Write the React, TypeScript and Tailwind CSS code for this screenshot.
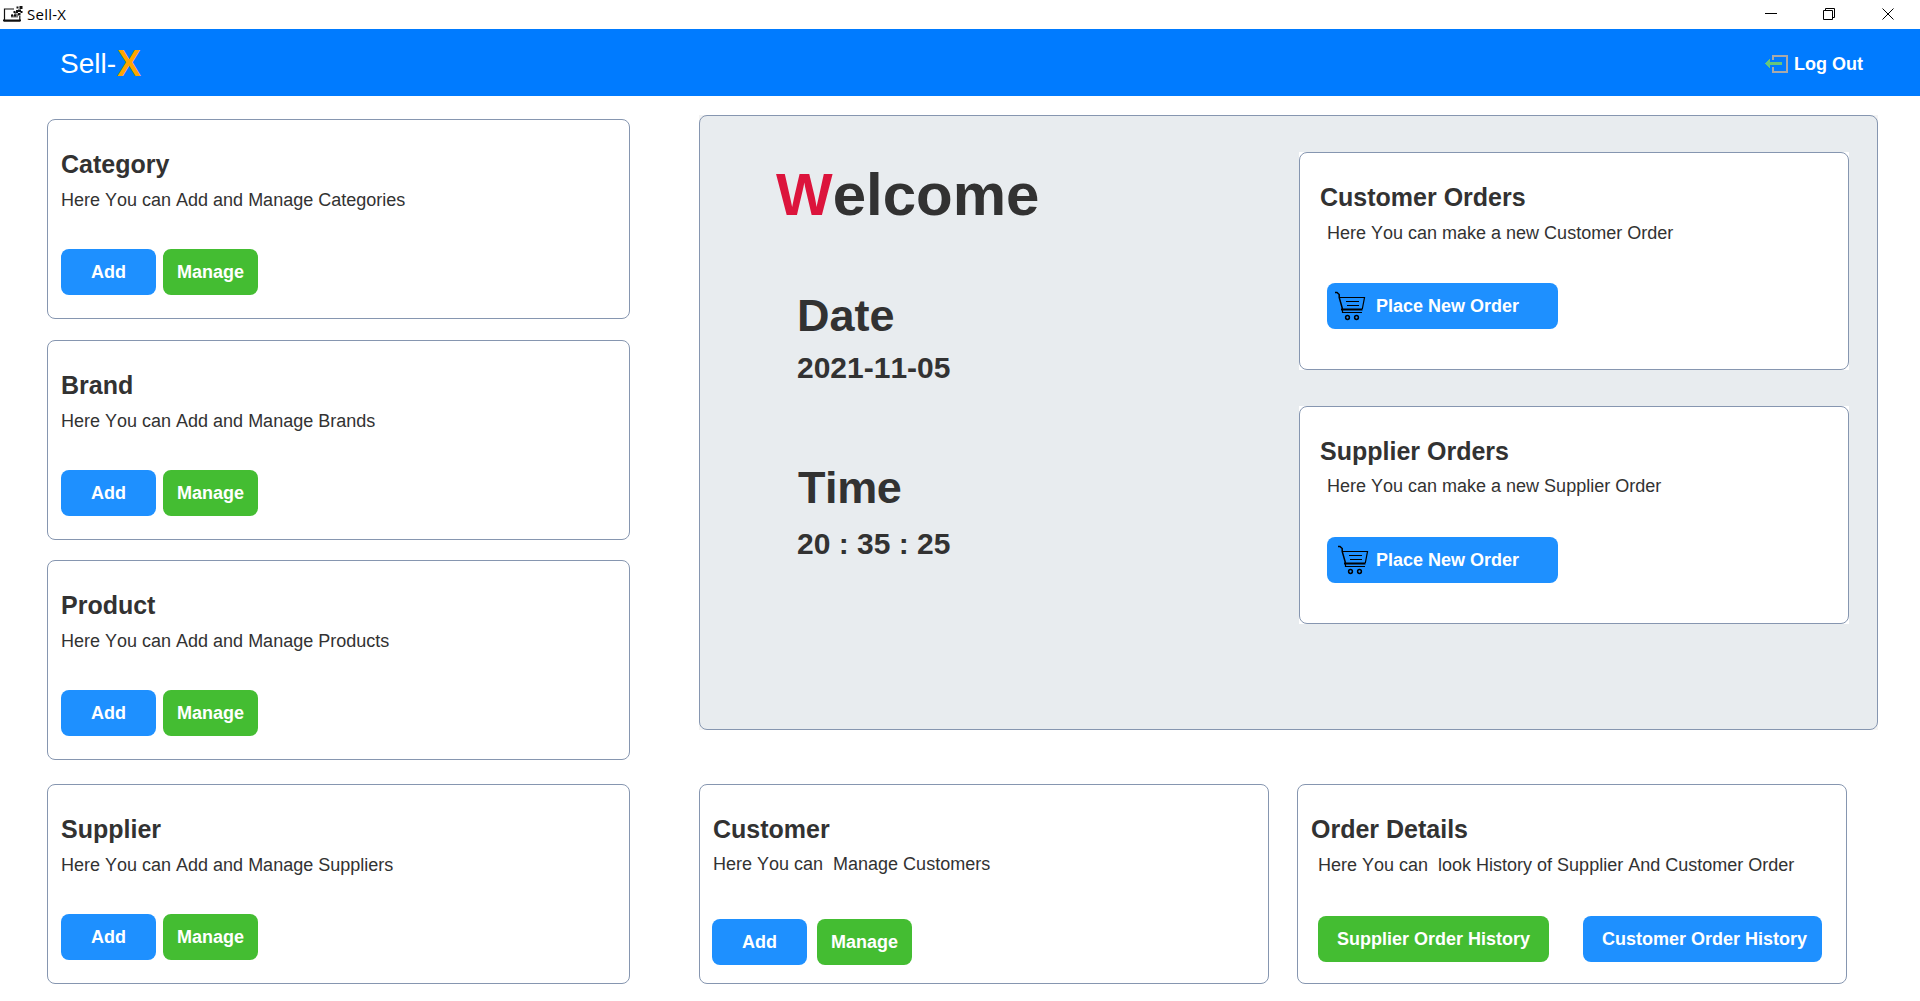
import React from 'react';

const font = "[font-family:'Liberation_Sans',Arial,sans-serif]";

function LaptopIcon() {
  return (
    <svg width="20" height="17" viewBox="0 0 20 17" className="-mt-px shrink-0" fill="#111">
      <path d="M1.500 3h9.500M1.500 2.500v11.500M16.800 10v4" stroke="#111" strokeWidth="1.200" fill="none" />
      <path d="M0 13.500h18v1.500l-1 .800H1l-1-.800z" />
      <path d="M8 9.500l1.500-1.500 1 1.500 1.500-3.500 1 0 0 1.500 2 0 0 4-7 0z" fill="#777" />
      <rect x="8" y="8.500" width="2" height="2" />
      <rect x="10.500" y="5" width="2" height="2" />
      <rect x="13" y="4" width="2" height="3" />
      <rect x="11" y="8.500" width="2" height="2" />
      <rect x="13.500" y="0.500" width="2" height="2" />
      <rect x="16.500" y="0" width="3" height="3" />
      <rect x="15" y="3.500" width="3" height="2.500" />
      <rect x="17.500" y="5" width="2" height="2" />
      <rect x="15" y="7" width="2.500" height="2.500" />
    </svg>
  );
}

function LogoutIcon() {
  return (
    <svg width="23" height="20" viewBox="0 0 23 20" className="shrink-0" shapeRendering="crispEdges">
      <path d="M8 6V2H22V18H8V13" fill="none" stroke="#a9a9a9" strokeWidth="2" />
      <path d="M0 9.500L5 5V8H17V11H5V14Z" fill="#66c57c" />
    </svg>
  );
}

function CartIcon() {
  return (
    <svg width="31" height="30" viewBox="0 0 31 30" className="shrink-0" fill="none" stroke="#000">
      <path d="M0 1.500H2L4.200 3.500V6.500L7.500 18" strokeWidth="1.500" />
      <path d="M4 6.500H29.500L27.300 18" strokeWidth="1.200" />
      <path d="M6 18.500H27.500" strokeWidth="2" />
      <path d="M7.500 18V21.500H27" strokeWidth="1.200" />
      <path d="M11 10.500H24M12 14.500H24" strokeWidth="1" />
      <circle cx="12.500" cy="26.500" r="1.900" strokeWidth="1.500" />
      <circle cx="21.500" cy="26.500" r="1.900" strokeWidth="1.500" />
    </svg>
  );
}

function Button({ className, children }: { className: string; children: React.ReactNode }) {
  return (
    <button className={`flex h-[46px] items-center rounded-lg text-lg leading-[22px] font-bold whitespace-nowrap text-white ${className}`}>
      {children}
    </button>
  );
}

function Card({ className, children }: { className: string; children: React.ReactNode }) {
  return <section className={`rounded-lg border border-[#8696b0] bg-white ${className}`}>{children}</section>;
}

function Heading({ children }: { children: React.ReactNode }) {
  return <h2 className="text-[25px] leading-[30px] font-bold">{children}</h2>;
}

function Description({ className, children }: { className: string; children: React.ReactNode }) {
  return <p className={`text-lg leading-[22px] whitespace-pre ${className}`}>{children}</p>;
}

function EntityCard({ title, text, className }: { title: string; text: string; className: string }) {
  return (
    <Card className={`h-[200px] w-[583px] pt-[29px] pl-[13px] ${className}`}>
      <Heading>{title}</Heading>
      <Description className="mt-[10px]">{text}</Description>
      <div className="mt-[38px] flex gap-[7px]">
        <Button className="w-[95px] justify-center bg-[#1e90ff]">Add</Button>
        <Button className="w-[95px] justify-center bg-[#44bd32]">Manage</Button>
      </div>
    </Card>
  );
}

function OrderCard({ title, text, textClass, iconClass }: { title: string; text: string; textClass: string; iconClass: string }) {
  return (
    <div className="bg-white">
      <Card className="h-[218px] w-[550px] pt-[29px] pl-5">
        <Heading>{title}</Heading>
        <Description className={`ml-[7px] ${textClass}`}>{text}</Description>
        <Button className={`ml-[7px] w-[231px] bg-[#1e90ff] ${iconClass}`}>
          <CartIcon />
          Place New Order
        </Button>
      </Card>
    </div>
  );
}

export default function App() {
  return (
    <div className={`h-[1001px] w-[1920px] overflow-hidden bg-white text-[#323232] [font-kerning:none] ${font}`}>
      <header className="flex h-[29px] items-center justify-between pr-[25px] pl-[3px] text-black">
        <div className="flex items-center gap-1">
          <LaptopIcon />
          <span className="-mt-0.5 text-[15px] leading-[20px] tracking-[0.25px] [font-family:'Open_Sans',sans-serif]">Sell-X</span>
        </div>
        <svg width="130" height="13" viewBox="0 0 130 13" fill="none" stroke="#000">
          <path d="M0 5.500H12" />
          <path d="M58.500 2.500H67.500V11.500H58.500ZM60.500 2.500V0.500H69.500V9.500H67.500" />
          <path d="M117.500 0.500L128.500 11.500M128.500 0.500L117.500 11.500" />
        </svg>
      </header>
      <nav className="flex h-[67px] items-center justify-between bg-[#007bff] pt-[2px] pr-[57px] pl-[60px] text-white">
        <div className="flex items-start text-[28px] leading-8">
          <span>Sell-</span>
          <span className="ml-px text-[36px] font-bold text-[#ffa500]">X</span>
        </div>
        <div className="flex items-center gap-1.5 text-lg font-bold">
          <LogoutIcon />
          Log Out
        </div>
      </nav>
      <main className="flex pl-[47px]">
        <div className="flex flex-col pt-[23px]">
          <EntityCard className="" title="Category" text="Here You can Add and Manage Categories" />
          <EntityCard className="mt-[21px]" title="Brand" text="Here You can Add and Manage Brands" />
          <EntityCard className="mt-[20px]" title="Product" text="Here You can Add and Manage Products" />
          <EntityCard className="mt-[24px]" title="Supplier" text="Here You can Add and Manage Suppliers" />
        </div>
        <div className="ml-[69px] pt-[19px]">
          <div className="bg-[#f4f4f4]">
            <section className="flex h-[615px] w-[1179px] justify-between rounded-lg border border-[#8696b0] bg-[#e8ecef] pr-[28px] pl-[76px]">
              <div className="pt-[44px]">
                <h1 className="text-[60px] leading-[70px] font-bold">
                  <span className="text-[#dc143c]">W</span>elcome
                </h1>
                <div className="pl-[21px] font-bold">
                  <h3 className="mt-[59px] text-[45px] leading-[54px]">Date</h3>
                  <p className="mt-[7px] text-[30px] leading-[36px]">2021-11-05</p>
                  <h3 className="mt-[75px] ml-px text-[45px] leading-[54px] tracking-[-0.4px]">Time</h3>
                  <p className="mt-[11px] text-[30px] leading-[36px] whitespace-pre">20 : 35 : 25</p>
                </div>
              </div>
              <div className="flex flex-col gap-[36px] pt-[36px]">
                <OrderCard title="Customer Orders" text="Here You can make a new Customer Order" textClass="mt-[10px] mb-[39px]" iconClass="gap-[10px] pl-[8px]" />
                <OrderCard title="Supplier Orders" text="Here You can make a new Supplier Order" textClass="mt-[9px] mb-[40px]" iconClass="gap-[7px] pl-[11px]" />
              </div>
            </section>
          </div>
          <div className="mt-[54px] flex gap-[28px]">
            <Card className="h-[200px] w-[570px] pt-[29px] pl-[13px]">
              <Heading>Customer</Heading>
              <Description className="mt-[9px]">{'Here You can  Manage Customers'}</Description>
              <div className="-ml-px mt-[44px] flex gap-[10px]">
                <Button className="w-[95px] justify-center bg-[#1e90ff]">Add</Button>
                <Button className="w-[95px] justify-center bg-[#44bd32]">Manage</Button>
              </div>
            </Card>
            <Card className="h-[200px] w-[550px] pt-[29px] pl-[13px]">
              <Heading>Order Details</Heading>
              <Description className="mt-[10px] ml-[7px]">{'Here You can  look History of Supplier And Customer Order'}</Description>
              <div className="mt-[40px] ml-[7px] flex gap-[34px]">
                <Button className="w-[231px] justify-center bg-[#44bd32]">Supplier Order History</Button>
                <Button className="w-[239px] justify-center bg-[#1e90ff] pl-1">Customer Order History</Button>
              </div>
            </Card>
          </div>
        </div>
      </main>
    </div>
  );
}
